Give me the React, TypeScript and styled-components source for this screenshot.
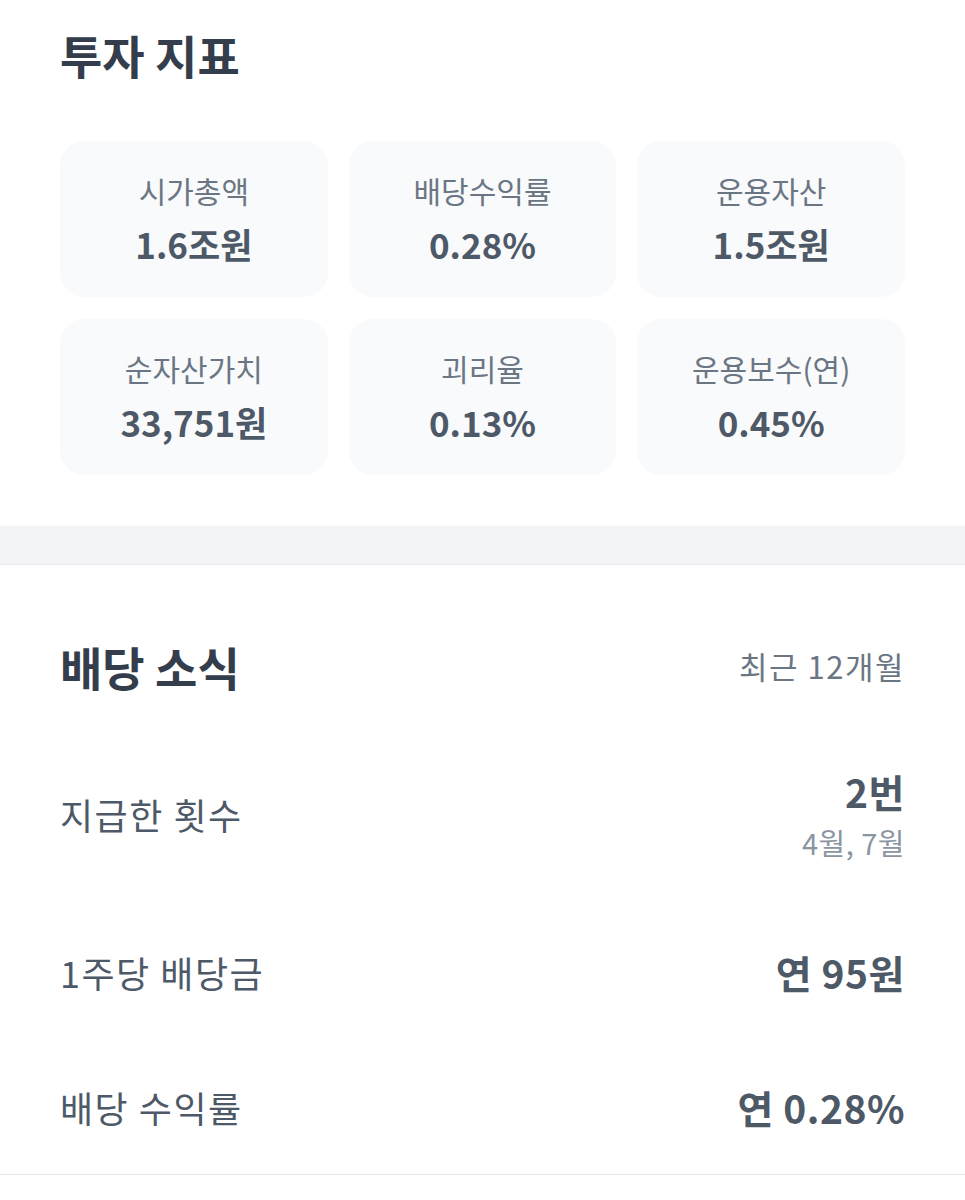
import React from 'react';
import styled, { createGlobalStyle } from 'styled-components';

const GlobalStyle = createGlobalStyle`
  body {
    margin: 0;
    background: #fff;
    font-family: "Noto Sans CJK KR", "Noto Sans", sans-serif;
    -webkit-font-smoothing: antialiased;
  }
`

const Page = styled.div`
  width: 965px;
  background: #fff;
`
const Section = styled.section<{ $top: number; $bottom: number }>`
  padding: ${p => p.$top}px 60px ${p => p.$bottom}px;
`
const SectionHeader = styled.div`
  display: flex;
  align-items: center;
  justify-content: space-between;
`
const Title = styled.h2`
  margin: 0;
  font-size: 46px;
  line-height: 56px;
  font-weight: 700;
  color: #333d4b;
`
const Period = styled.span`
  font-size: 31px;
  line-height: 40px;
  color: #6b7684;
  letter-spacing: 1.5px;
`
const CardGrid = styled.div`
  display: grid;
  grid-template-columns: repeat(3, 1fr);
  gap: 22px 21px;
  margin-top: 59px;
`
const Card = styled.div`
  display: flex;
  flex-direction: column;
  align-items: center;
  height: 156px;
  padding-top: 29px;
  box-sizing: border-box;
  background: #f9fafb;
  border-radius: 24px;
`
const CardLabel = styled.div`
  font-size: 30px;
  line-height: 40px;
  color: #6b7684;
`
const CardValue = styled.div`
  margin-top: 12px;
  font-size: 35px;
  line-height: 44px;
  font-weight: 700;
  color: #4e5968;
`
const Divider = styled.div`
  height: 38px;
  background: #f2f4f6;
  border-bottom: 1px solid #e8eaed;
`
const RowList = styled.div`
  display: flex;
  flex-direction: column;
  gap: 89px;
  margin-top: 74px;
`
const Row = styled.div`
  display: flex;
  align-items: center;
  justify-content: space-between;
`
const RowLabel = styled.span`
  font-size: 36px;
  line-height: 46px;
  color: #4e5968;
  letter-spacing: 1.5px;
`
const RowValue = styled.div`
  display: flex;
  flex-direction: column;
  align-items: flex-end;
`
const Amount = styled.span`
  font-size: 39px;
  line-height: 46px;
  font-weight: 700;
  color: #4e5968;
  letter-spacing: 0.5px;
`
const Note = styled.span`
  margin-top: 10px;
  font-size: 29px;
  line-height: 36px;
  color: #8b95a1;
  letter-spacing: 0.5px;
`
const BottomLine = styled.div`
  height: 1px;
  background: #e5e8eb;
`

const metrics = [
  { label: '시가총액', value: '1.6조원' },
  { label: '배당수익률', value: '0.28%' },
  { label: '운용자산', value: '1.5조원' },
  { label: '순자산가치', value: '33,751원' },
  { label: '괴리율', value: '0.13%' },
  { label: '운용보수(연)', value: '0.45%' },
]

const dividends = [
  { label: '지급한 횟수', value: '2번', note: '4월, 7월' },
  { label: '1주당 배당금', value: '연 95원' },
  { label: '배당 수익률', value: '연 0.28%' },
]

const App: React.FC = () => {
  return (
    <Page>
      <GlobalStyle />
      <Section $top={26} $bottom={51}>
        <Title>투자 지표</Title>
        <CardGrid>
          {metrics.map(m => (
            <Card key={m.label}>
              <CardLabel>{m.label}</CardLabel>
              <CardValue>{m.value}</CardValue>
            </Card>
          ))}
        </CardGrid>
      </Section>
      <Divider />
      <Section $top={73} $bottom={44}>
        <SectionHeader>
          <Title>배당 소식</Title>
          <Period>최근 12개월</Period>
        </SectionHeader>
        <RowList>
          {dividends.map(d => (
            <Row key={d.label}>
              <RowLabel>{d.label}</RowLabel>
              <RowValue>
                <Amount>{d.value}</Amount>
                {d.note && <Note>{d.note}</Note>}
              </RowValue>
            </Row>
          ))}
        </RowList>
      </Section>
      <BottomLine />
    </Page>
  );
}

export default App;
